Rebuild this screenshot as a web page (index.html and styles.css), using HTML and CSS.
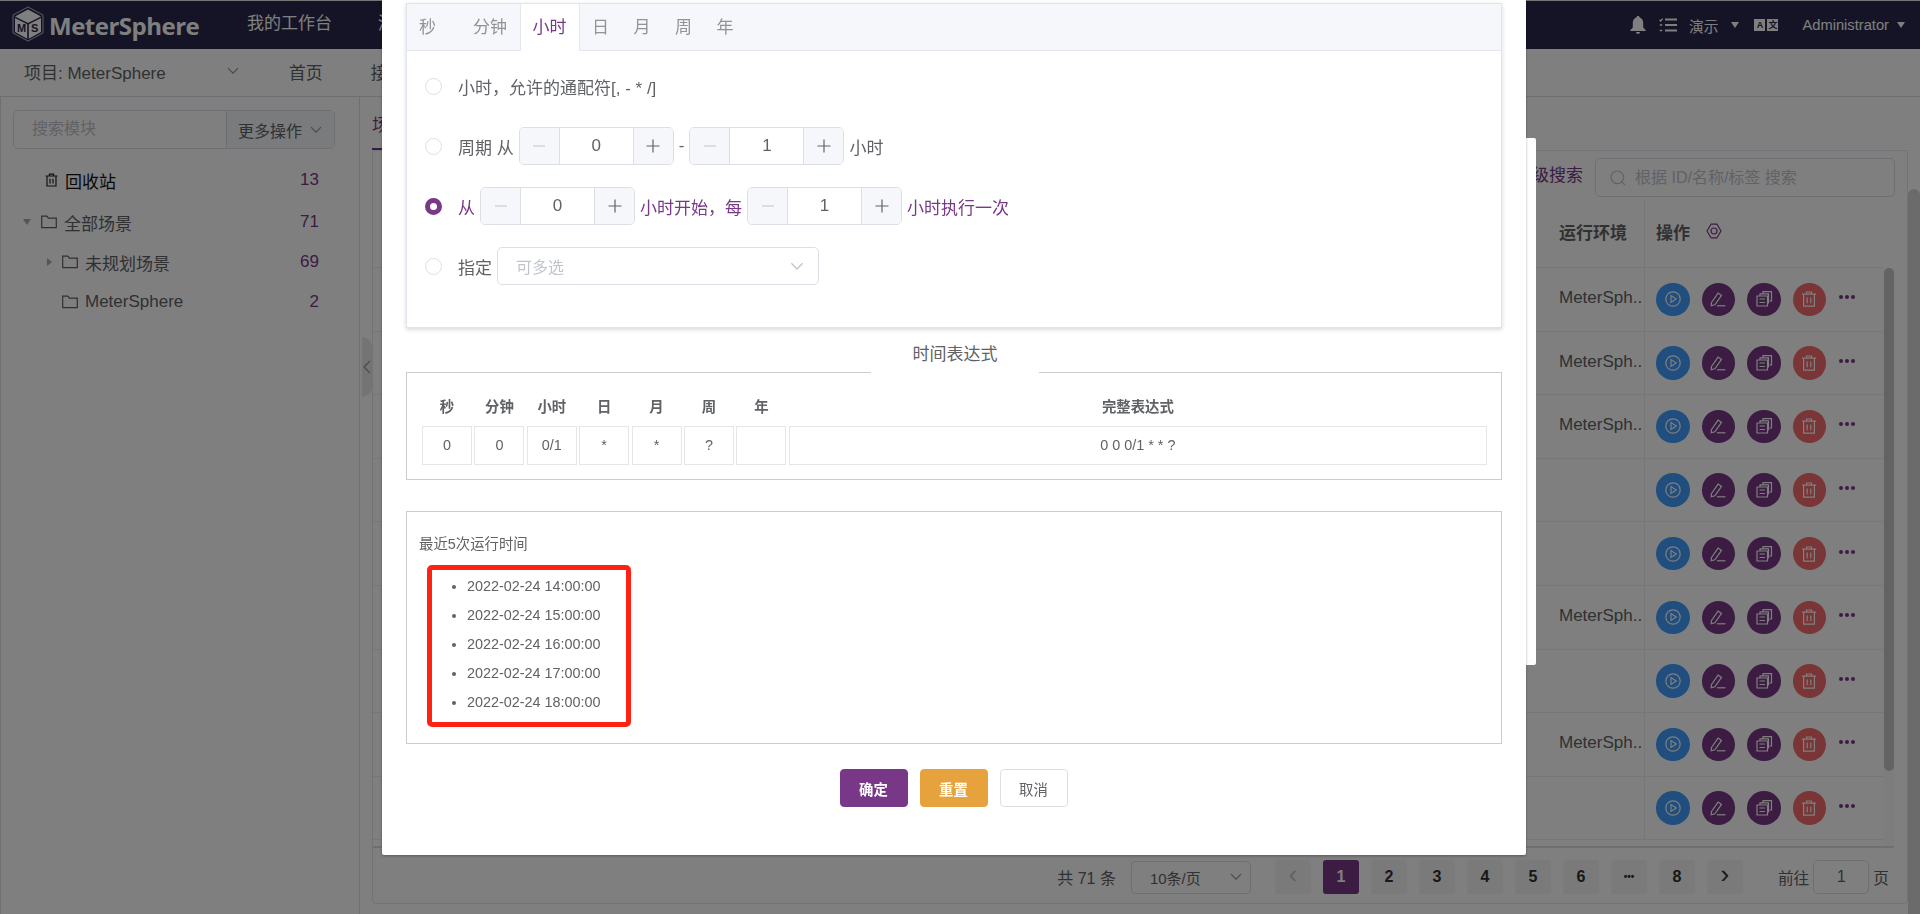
FILE: index.html
```html
<!DOCTYPE html>
<html lang="zh-CN">
<head>
    <meta charset="UTF-8">
    <title>MeterSphere</title>
    <link rel="stylesheet" href="styles.css">
</head>
<body>
    <svg class="defs" width="0" height="0">
        <symbol id="i-play" viewBox="0 0 18 18"><circle cx="9" cy="9" r="7.2"/><path d="M7 5.6v6.8l5.2-3.4z"/></symbol>
        <symbol id="i-edit" viewBox="0 0 18 18"><path d="M2.5 12.5l6.6-9.4 3.4 2.3-6.6 9.4-3.7 1z"/><path d="M8 15.8h8.5"/></symbol>
        <symbol id="i-copy" viewBox="0 0 18 18"><path d="M2 6h10.5v10H2zM4.500 9h5.500M4.500 12.500h5.500"/><path d="M5 6V3.800h8.500V13h-1M8 3.800V1.600h8.500V11h-2"/></symbol>
        <symbol id="i-del" viewBox="0 0 18 18"><path d="M2 4.200h14M6.500 4V2h5v2M3.600 4.400v11.800h10.800V4.400M7.200 7.400v5.800M10.800 7.400v5.800"/></symbol>
        <symbol id="i-folder" viewBox="0 0 16 14"><path d="M.7 12.600V1.200h5.200l1.400 2h8v9.400z"/></symbol>
        <symbol id="i-chevron" viewBox="0 0 12 8"><path d="M1 1.200l5 5 5-5"/></symbol>
        <symbol id="i-plus" viewBox="0 0 14 14"><path d="M7 .5v13M.5 7h13"/></symbol>
        <symbol id="i-minus" viewBox="0 0 14 14"><path d="M1 7h12"/></symbol>
    </svg>

    <!-- Top bar -->
    <header class="topbar">
        <div class="logo">
            <svg class="logo-cube" viewBox="0 0 32 36" width="32" height="36">
                <path d="M16 1L31 9v18l-15 8-15-8V9z" fill="none" stroke="#fff" stroke-width=".7"/>
                <path d="M16 3.500L29 10.500 16 17 3 10.500z" fill="#fff"/>
                <path d="M3 12l12.200 6.200v14.600L3 26z" fill="#fff"/>
                <path d="M29 12l-12.200 6.200v14.600L29 26z" fill="#fff"/>
                <text x="5" y="26" class="logo-m">M</text>
                <text x="19" y="26" class="logo-s">S</text>
            </svg>
            <span class="logo-text">MeterSphere</span>
        </div>
        <nav class="topnav">
            <a>我的工作台</a>
            <a>测试</a>
        </nav>
        <div class="topright">
            <svg class="bell" viewBox="0 0 16 18" width="16" height="18"><path d="M8 0c1 0 1.600.7 1.600 1.600C12 2.300 13.200 4.400 13.200 7v4.500L15.600 14v1H.4v-1l2.400-2.500V7c0-2.600 1.200-4.700 3.600-5.400C6.400.7 7 0 8 0zM6 16h4c0 1.100-.9 2-2 2s-2-.9-2-2z"/></svg>
            <svg class="tasks" viewBox="0 0 18 14" width="18" height="14"><path d="M6 1.500h12M6 7h12M6 12.500h12"/><path class="thin" d="M.5 1.800l1.200 1.200L3.600.6M.8 7h2.400M.8 12.500h2.400"/></svg>
            <span class="org">演示</span>
            <i class="caret-down"></i>
            <span class="lang"><b>A</b><b class="lang-zh">文</b></span>
            <span class="user">Administrator</span>
            <i class="caret-down"></i>
        </div>
    </header>

    <!-- Project bar -->
    <div class="subbar">
        <span class="project">项目: MeterSphere</span>
        <svg class="chev project-chev" width="12" height="8"><use href="#i-chevron"/></svg>
        <a class="sub-first">首页</a>
        <a>接口测试</a>
    </div>

    <div class="page">
        <aside class="side">
            <div class="side-search">
                <span class="side-input">搜索模块</span>
                <span class="side-more">更多操作<svg class="chev" width="12" height="8"><use href="#i-chevron"/></svg></span>
            </div>
            <div class="tree-row tree-trash">
                <svg class="trash" width="15" height="16" viewBox="0 0 18 18"><use href="#i-del"/></svg>
                <span class="tree-name">回收站</span><span class="tree-count">13</span>
            </div>
            <div class="tree-row">
                <i class="tree-caret open"></i>
                <svg class="folder" width="16" height="14"><use href="#i-folder"/></svg>
                <span>全部场景</span><span class="tree-count">71</span>
            </div>
            <div class="tree-row tree-child">
                <i class="tree-caret"></i>
                <svg class="folder" width="16" height="14"><use href="#i-folder"/></svg>
                <span>未规划场景</span><span class="tree-count">69</span>
            </div>
            <div class="tree-row tree-child">
                <i class="tree-caret none"></i>
                <svg class="folder" width="16" height="14"><use href="#i-folder"/></svg>
                <span>MeterSphere</span><span class="tree-count">2</span>
            </div>
        </aside>
        <div class="side-handle"><svg width="8" height="14" viewBox="0 0 8 14"><path d="M7 1L1 7l6 6"/></svg></div>

        <main class="content">
            <div class="content-tabs"><span class="content-tab">场景列表</span></div>
            <section class="list-card">
                <div class="toolbar">
                    <a class="adv">高级搜索</a>
                    <div class="list-search">
                        <svg width="16" height="16" viewBox="0 0 16 16"><circle cx="7.300" cy="7.300" r="6.300"/><path d="M12 12l3 3"/></svg>
                        <span>根据 ID/名称/标签 搜索</span>
                    </div>
                </div>
                <div class="table">
                    <div class="table-head">
                        <span></span>
                        <b>运行环境</b>
                        <div class="col-ops"><b>操作</b>
                            <svg class="gear" width="16" height="16" viewBox="0 0 16 16"><path d="M5 1.200h6L15 8l-4 6.800H5L1 8z" stroke-linejoin="round"/><circle cx="8" cy="8" r="3"/></svg>
                        </div>
                    </div>
                    <div class="table-main">
                        <div class="table-rows">
                            <div class="row"><span></span><span class="env">MeterSph..</span><div class="ops"><i class="op blue"><svg><use href="#i-play"/></svg></i><i class="op purple"><svg><use href="#i-edit"/></svg></i><i class="op purple"><svg><use href="#i-copy"/></svg></i><i class="op red"><svg><use href="#i-del"/></svg></i><i class="dots"></i></div></div>
                            <div class="row"><span></span><span class="env">MeterSph..</span><div class="ops"><i class="op blue"><svg><use href="#i-play"/></svg></i><i class="op purple"><svg><use href="#i-edit"/></svg></i><i class="op purple"><svg><use href="#i-copy"/></svg></i><i class="op red"><svg><use href="#i-del"/></svg></i><i class="dots"></i></div></div>
                            <div class="row"><span></span><span class="env">MeterSph..</span><div class="ops"><i class="op blue"><svg><use href="#i-play"/></svg></i><i class="op purple"><svg><use href="#i-edit"/></svg></i><i class="op purple"><svg><use href="#i-copy"/></svg></i><i class="op red"><svg><use href="#i-del"/></svg></i><i class="dots"></i></div></div>
                            <div class="row"><span></span><span class="env"></span><div class="ops"><i class="op blue"><svg><use href="#i-play"/></svg></i><i class="op purple"><svg><use href="#i-edit"/></svg></i><i class="op purple"><svg><use href="#i-copy"/></svg></i><i class="op red"><svg><use href="#i-del"/></svg></i><i class="dots"></i></div></div>
                            <div class="row"><span></span><span class="env"></span><div class="ops"><i class="op blue"><svg><use href="#i-play"/></svg></i><i class="op purple"><svg><use href="#i-edit"/></svg></i><i class="op purple"><svg><use href="#i-copy"/></svg></i><i class="op red"><svg><use href="#i-del"/></svg></i><i class="dots"></i></div></div>
                            <div class="row"><span></span><span class="env">MeterSph..</span><div class="ops"><i class="op blue"><svg><use href="#i-play"/></svg></i><i class="op purple"><svg><use href="#i-edit"/></svg></i><i class="op purple"><svg><use href="#i-copy"/></svg></i><i class="op red"><svg><use href="#i-del"/></svg></i><i class="dots"></i></div></div>
                            <div class="row"><span></span><span class="env"></span><div class="ops"><i class="op blue"><svg><use href="#i-play"/></svg></i><i class="op purple"><svg><use href="#i-edit"/></svg></i><i class="op purple"><svg><use href="#i-copy"/></svg></i><i class="op red"><svg><use href="#i-del"/></svg></i><i class="dots"></i></div></div>
                            <div class="row"><span></span><span class="env">MeterSph..</span><div class="ops"><i class="op blue"><svg><use href="#i-play"/></svg></i><i class="op purple"><svg><use href="#i-edit"/></svg></i><i class="op purple"><svg><use href="#i-copy"/></svg></i><i class="op red"><svg><use href="#i-del"/></svg></i><i class="dots"></i></div></div>
                            <div class="row"><span></span><span class="env"></span><div class="ops"><i class="op blue"><svg><use href="#i-play"/></svg></i><i class="op purple"><svg><use href="#i-edit"/></svg></i><i class="op purple"><svg><use href="#i-copy"/></svg></i><i class="op red"><svg><use href="#i-del"/></svg></i><i class="dots"></i></div></div>
                        </div>
                        <div class="table-track"><div class="table-scroll"></div></div>
                    </div>
                </div>
                <div class="pager">
                    <span class="pager-total">共 71 条</span>
                    <span class="pager-size">10条/页<svg class="chev" width="12" height="8"><use href="#i-chevron"/></svg></span>
                    <div class="pager-list">
                        <span class="pg arrow muted">&lsaquo;</span>
                        <span class="pg on">1</span>
                        <span class="pg">2</span>
                        <span class="pg">3</span>
                        <span class="pg">4</span>
                        <span class="pg">5</span>
                        <span class="pg">6</span>
                        <span class="pg more">•••</span>
                        <span class="pg">8</span>
                        <span class="pg arrow">&rsaquo;</span>
                    </div>
                    <span class="pager-jump">前往<span class="pager-input">1</span>页</span>
                </div>
            </section>
        </main>
        <div class="page-scroll"></div>
    </div>

    <!-- Mask and dialogs -->
    <div class="mask"></div>
    <div class="dialog-back"></div>
    <div class="dialog">
        <section class="cron-card">
            <div class="cron-tabs">
                <span class="cron-tab first">秒</span>
                <span class="cron-tab">分钟</span>
                <span class="cron-tab active">小时</span>
                <span class="cron-tab">日</span>
                <span class="cron-tab">月</span>
                <span class="cron-tab">周</span>
                <span class="cron-tab">年</span>
            </div>
            <div class="cron-body">
                <div class="cron-row">
                    <i class="radio"></i>
                    <span>小时，允许的通配符[, - * /]</span>
                </div>
                <div class="cron-row">
                    <i class="radio"></i>
                    <span>周期 从</span>
                    <div class="number"><span class="num-btn"><svg width="14" height="14"><use href="#i-minus"/></svg></span><span class="num-val">0</span><span class="num-btn dark"><svg width="14" height="14"><use href="#i-plus"/></svg></span></div>
                    <span>-</span>
                    <div class="number"><span class="num-btn"><svg width="14" height="14"><use href="#i-minus"/></svg></span><span class="num-val">1</span><span class="num-btn dark"><svg width="14" height="14"><use href="#i-plus"/></svg></span></div>
                    <span>小时</span>
                </div>
                <div class="cron-row checked">
                    <i class="radio"></i>
                    <span>从</span>
                    <div class="number"><span class="num-btn"><svg width="14" height="14"><use href="#i-minus"/></svg></span><span class="num-val">0</span><span class="num-btn dark"><svg width="14" height="14"><use href="#i-plus"/></svg></span></div>
                    <span>小时开始，每</span>
                    <div class="number"><span class="num-btn"><svg width="14" height="14"><use href="#i-minus"/></svg></span><span class="num-val">1</span><span class="num-btn dark"><svg width="14" height="14"><use href="#i-plus"/></svg></span></div>
                    <span>小时执行一次</span>
                </div>
                <div class="cron-row">
                    <i class="radio"></i>
                    <span>指定</span>
                    <div class="select"><span>可多选</span><svg class="chev" width="14" height="9"><use href="#i-chevron"/></svg></div>
                </div>
            </div>
        </section>

        <section class="box box-expr">
            <div class="box-title">时间表达式</div>
            <div class="expr-grid">
                <b>秒</b><b>分钟</b><b>小时</b><b>日</b><b>月</b><b>周</b><b>年</b><b>完整表达式</b>
                <span>0</span><span>0</span><span>0/1</span><span>*</span><span>*</span><span>?</span><span></span><span>0 0 0/1 * * ?</span>
            </div>
        </section>

        <section class="box box-runs">
            <p class="runs-title">最近5次运行时间</p>
            <div class="runs-mark">
                <ul class="runs">
                    <li>2022-02-24 14:00:00</li>
                    <li>2022-02-24 15:00:00</li>
                    <li>2022-02-24 16:00:00</li>
                    <li>2022-02-24 17:00:00</li>
                    <li>2022-02-24 18:00:00</li>
                </ul>
            </div>
        </section>

        <div class="dialog-btns">
            <button class="btn btn-ok">确定</button>
            <button class="btn btn-reset">重置</button>
            <button class="btn">取消</button>
        </div>
    </div>
</body>
</html>
```

FILE: styles.css
```css
* {
    box-sizing: border-box;
}
html, body {
    height: 100%;
}
body {
    margin: 0;
    overflow: hidden;
    font-family: "Liberation Sans", "Noto Sans CJK SC", sans-serif;
    font-size: 17px;
    color: #606266;
    background-color: #fff;
}
.defs {
    position: absolute;
}
.chev {
    fill: none;
    stroke: #909399;
    stroke-width: 1.2;
}

/* top bar */
.topbar {
    display: flex;
    align-items: center;
    height: 49px;
    border-top: 1px solid #e8e8e8;
    background-color: #28284c;
    color: #fff;
}
.logo {
    display: flex;
    align-items: center;
    width: 247px;
    padding-left: 12px;
}
.logo-cube {
    flex: none;
    margin-top: -2px;
}
.logo-m, .logo-s {
    font-size: 11px;
    font-weight: bold;
    fill: #28284c;
}
.logo-text {
    margin-left: 5px;
    font-size: 24px;
    font-weight: bold;
    font-family: "Open Sans", sans-serif;
    letter-spacing: -.5px;
}
.topnav {
    display: flex;
    gap: 46px;
    margin-top: -7px;
}
.topright {
    display: flex;
    align-items: center;
    margin-left: auto;
    padding-right: 15px;
    font-size: 14.700px;
}
.bell {
    fill: #fff;
}
.tasks {
    margin-left: 13px;
    stroke: #fff;
    stroke-width: 1.800;
    fill: none;
}
.tasks .thin {
    stroke-width: 1.300;
}
.org {
    margin-left: 12px;
}
.caret-down {
    width: 0;
    height: 0;
    margin-left: 13px;
    border-left: 4.500px solid transparent;
    border-right: 4.500px solid transparent;
    border-top: 6px solid #fff;
}
.lang {
    display: flex;
    margin-left: 15px;
}
.lang b {
    display: block;
    width: 11px;
    height: 12px;
    margin-right: 2px;
    background-color: #fff;
    color: #28284c;
    font-size: 9px;
    line-height: 12px;
    text-align: center;
}
.lang .lang-zh {
    margin-right: 0;
}
.user {
    margin-left: 24px;
}
.user + .caret-down {
    margin-left: 8px;
}

/* project bar */
.subbar {
    display: flex;
    align-items: center;
    height: 48px;
    padding: 0 0 3px 24px;
    border-bottom: 1px solid #dcdfe6;
}
.project-chev {
    margin-left: 61px;
}
.sub-first {
    margin-left: 50px;
    margin-right: 48px;
}

.page {
    display: flex;
    position: relative;
    height: 817px;
}

/* module tree */
.side {
    width: 360px;
    flex: none;
    padding: 13px 24px 0 12px;
    border-right: 1px solid #dcdfe6;
    border-left: 1px solid #dcdfe6;
}
.side-search {
    display: flex;
    height: 39px;
    border: 1px solid #dcdfe6;
    border-radius: 5px;
    font-size: 16px;
}
.side-input {
    flex: 1;
    padding-left: 18px;
    color: #c0c4cc;
    line-height: 35px;
}
.side-more {
    display: flex;
    align-items: center;
    gap: 8px;
    width: 108px;
    padding-left: 11px;
    border-left: 1px solid #dcdfe6;
    background-color: #f5f7fa;
    border-radius: 0 5px 5px 0;
}
.tree-row {
    display: flex;
    align-items: center;
    height: 40px;
    padding-right: 16px;
}
.tree-trash {
    margin-top: 11px;
    margin-bottom: 2px;
    padding-left: 31px;
    color: #111;
}
.trash {
    fill: none;
    stroke: #222;
    stroke-width: 1.400;
    margin-right: 6px;
}
.tree-caret {
    width: 0;
    height: 0;
    margin: 0 10px 0 11px;
    border-left: 5px solid #a8abb2;
    border-top: 4.500px solid transparent;
    border-bottom: 4.500px solid transparent;
}
.tree-caret.open {
    margin: 0 10px 0 10px;
    border-top: 6px solid #a8abb2;
    border-left: 4.500px solid transparent;
    border-right: 4.500px solid transparent;
    border-bottom: 0;
}
.tree-caret.none {
    border-left-color: transparent;
}
.tree-child {
    padding-left: 23px;
}
.folder {
    margin-right: 7px;
    fill: none;
    stroke: #606266;
    stroke-width: 1.200;
}
.tree-count {
    margin-left: auto;
    color: #783887;
}
.side-handle {
    display: flex;
    align-items: center;
    justify-content: center;
    position: absolute;
    left: 362px;
    top: 240px;
    width: 10px;
    height: 60px;
    border-radius: 0 10px 10px 0;
    background-color: #e8e8e8;
}
.side-handle svg {
    fill: none;
    stroke: #909399;
    stroke-width: 1.200;
}

/* scenario list */
.content {
    flex: 1;
    min-width: 0;
    padding-left: 12px;
}
.content-tabs {
    height: 53px;
    line-height: 58px;
    color: #783887;
    white-space: nowrap;
}
.content-tab {
    display: inline-block;
    height: 53px;
    border-bottom: 2px solid #783887;
}
.list-card {
    height: 754px;
    padding: 0 13px 0 0;
    border: 1px solid #e4e7ed;
    border-radius: 0 0 4px 4px;
}
.toolbar {
    display: flex;
    justify-content: flex-end;
    align-items: flex-start;
    gap: 12px;
    height: 49px;
    padding-top: 7px;
}
.adv {
    color: #783887;
    line-height: 35px;
}
.list-search {
    display: flex;
    align-items: center;
    gap: 9px;
    width: 300px;
    height: 39px;
    margin-right: -1px;
    padding-left: 14px;
    border: 1px solid #dcdfe6;
    border-radius: 5px;
    color: #c0c4cc;
    font-size: 16px;
}
.list-search span {
    margin-top: -3px;
}
.list-search svg {
    fill: none;
    stroke: #c0c4cc;
    stroke-width: 1.200;
}
.table-head, .row {
    display: grid;
    grid-template-columns: 1fr 85px 240px;
    align-items: center;
}
.table-head {
    height: 68px;
    margin-right: 10px;
    border-bottom: 1px solid #ebeef5;
}
.table-head > b {
    padding-bottom: 5px;
    color: #606266;
}
.col-ops {
    display: flex;
    align-items: center;
    align-self: stretch;
    gap: 16px;
    padding: 0 0 5px 11px;
    border-left: 1px solid #ebeef5;
}
.gear {
    fill: none;
    stroke: #783887;
    stroke-width: 1.200;
}
.table-main {
    display: flex;
    height: 580px;
    overflow: hidden;
    border-bottom: 2px solid #dcdfe6;
}
.table-rows {
    flex: 1;
}
.table-track {
    width: 10px;
    flex: none;
    background-color: #fafafa;
}
.table-scroll {
    height: 503px;
    border-radius: 5px;
    background-color: #c6c6c6;
}
.row {
    height: 63.600px;
    border-bottom: 1px solid #ebeef5;
}
.env {
    white-space: nowrap;
    margin-top: -2px;
}
.ops {
    display: flex;
    align-items: center;
    align-self: stretch;
    gap: 12px;
    padding-left: 11px;
    border-left: 1px solid #ebeef5;
}
.op {
    display: flex;
    align-items: center;
    justify-content: center;
    width: 33.500px;
    height: 33.500px;
    border-radius: 50%;
}
.op svg {
    width: 18px;
    height: 18px;
    fill: none;
    stroke: #fff;
    stroke-width: 1.200;
}
.blue {
    background-color: #409eff;
}
.purple {
    background-color: #783887;
}
.red {
    background-color: #f56c6c;
}
.dots {
    width: 4px;
    height: 4px;
    margin-left: 1px;
    border-radius: 50%;
    background-color: #783887;
    box-shadow: 6px 0 #783887, 12px 0 #783887;
    transform: translateY(-2px);
}
.pager {
    display: flex;
    align-items: center;
    height: 34px;
    margin-top: 12px;
    white-space: nowrap;
}
.pager-total {
    margin-left: auto;
    font-size: 16px;
}
.pager-size {
    display: flex;
    align-items: center;
    justify-content: space-between;
    width: 120px;
    height: 33px;
    margin-left: 15px;
    padding: 0 8px 0 18px;
    border: 1px solid #dcdfe6;
    border-radius: 4px;
    font-size: 15px;
}
.pager-list {
    display: flex;
    gap: 12px;
    margin-left: 24px;
}
.pg {
    width: 36px;
    height: 34px;
    border-radius: 3px;
    background-color: #f4f4f5;
    color: #303133;
    font-size: 16px;
    font-weight: bold;
    line-height: 34px;
    text-align: center;
}
.pg.on {
    background-color: #783887;
    color: #fff;
}
.pg.arrow {
    font-size: 26px;
    font-weight: normal;
    line-height: 29px;
}
.pg.more {
    font-size: 10px;
}
.pg.muted {
    color: #c0c4cc;
}
.pager-jump {
    display: flex;
    align-items: center;
    gap: 4px;
    margin-left: 35px;
    margin-right: 5px;
    font-size: 15.700px;
}
.pager-input {
    width: 56px;
    height: 34px;
    border: 1px solid #dcdfe6;
    border-radius: 5px;
    line-height: 32px;
    text-align: center;
}
.page-scroll {
    width: 12px;
    margin-top: 92px;
    flex: none;
    border-radius: 6px 6px 0 0;
    background-color: #d6d6d6;
}

/* dialogs */
.mask {
    position: fixed;
    top: 0;
    left: 0;
    right: 0;
    bottom: 0;
    background-color: rgba(0, 0, 0, .5);
}
.dialog-back {
    position: fixed;
    top: 138px;
    left: 382px;
    width: 1154px;
    height: 527px;
    border-radius: 2px;
    background-color: #fff;
}
.dialog {
    position: fixed;
    top: 0;
    left: 382px;
    width: 1144px;
    height: 855px;
    padding: 3px 24px 0;
    border-radius: 0 0 2px 2px;
    background-color: #fff;
    box-shadow: 0 1px 3px rgba(0, 0, 0, .3);
    color: #606266;
}
.cron-card {
    height: 325px;
    border: 1px solid #dfe4ed;
    box-shadow: 0 2px 4px rgba(0, 0, 0, .12), 0 0 6px rgba(0, 0, 0, .04);
}
.cron-tabs {
    display: flex;
    height: 47px;
    border-bottom: 1px solid #e4e7ed;
    background-color: #f5f7fa;
    color: #909399;
    line-height: 47px;
}
.cron-tab {
    padding: 0 12.500px 0 12px;
}
.cron-tab.first {
    padding-right: 25px;
}
.cron-tab.active {
    height: 47px;
    border-left: 1px solid #e4e7ed;
    border-right: 1px solid #e4e7ed;
    background-color: #fff;
    color: #783887;
}
.cron-body {
    padding: 5px 0 0 18px;
}
.cron-row {
    display: flex;
    align-items: center;
    gap: 5px;
    height: 60px;
}
.cron-row.checked {
    color: #783887;
}
.radio {
    flex: none;
    width: 17px;
    height: 17px;
    margin-right: 11px;
    border: 1px solid #dcdfe6;
    border-radius: 50%;
    background-color: #fff;
}
.checked .radio {
    border: 5.500px solid #783887;
}
.number {
    display: flex;
    width: 155px;
    height: 38px;
    border: 1px solid #dcdfe6;
    border-radius: 5px;
    overflow: hidden;
    color: #606266;
    line-height: 36px;
    text-align: center;
}
.num-btn {
    display: flex;
    align-items: center;
    justify-content: center;
    width: 40px;
    flex: none;
    background-color: #f5f7fa;
    fill: none;
    stroke: #c0c4cc;
    stroke-width: 1.200;
}
.num-btn:first-child {
    border-right: 1px solid #dcdfe6;
}
.num-btn.dark {
    border-left: 1px solid #dcdfe6;
    stroke: #606266;
}
.num-val {
    flex: 1;
}
.select {
    display: flex;
    align-items: center;
    justify-content: space-between;
    width: 322px;
    height: 38px;
    padding: 0 14px 0 18px;
    border: 1px solid #dcdfe6;
    border-radius: 5px;
    color: #c0c4cc;
    font-size: 16px;
}
.select .chev {
    stroke: #c0c4cc;
}
.box {
    position: relative;
    border: 1px solid #ccc;
}
.box-expr {
    height: 108px;
    margin-top: 44px;
    padding: 19px 14px 0 15px;
}
.box-title {
    position: absolute;
    top: -30px;
    left: 464px;
    width: 168px;
    height: 32px;
    background-color: #fff;
    font-size: 17px;
    line-height: 24px;
    text-align: center;
}
.expr-grid {
    display: grid;
    grid-template-columns: repeat(7, 50px) 1fr;
    grid-template-rows: 30px 39px;
    column-gap: 2.400px;
    row-gap: 4px;
    font-size: 14.400px;
    text-align: center;
}
.expr-grid b {
    line-height: 30px;
    font-size: 14.400px;
}
.expr-grid span {
    border: 1px solid #e6e6e6;
    line-height: 37px;
}
.box-runs {
    height: 233px;
    margin-top: 31px;
    padding: 22px 0 0 12px;
    font-size: 14.400px;
}
.runs-title {
    margin: 0 0 11px;
    line-height: 20px;
}
.runs-mark {
    width: 204px;
    height: 162px;
    margin-left: 8px;
    border: 5px solid #ff2214;
    border-radius: 5px;
}
.runs {
    margin: 0;
    padding: 2px 0 0 35px;
}
.runs li {
    height: 29px;
    line-height: 29px;
}
.dialog-btns {
    display: flex;
    justify-content: center;
    gap: 12px;
    margin-top: 25px;
    padding-right: 1px;
}
.btn {
    width: 68px;
    height: 38px;
    padding: 0;
    border: 1px solid #dcdfe6;
    border-radius: 4px;
    background-color: #fff;
    color: #606266;
    font-family: inherit;
    font-size: 14.400px;
}
.btn-ok {
    border-color: #783887;
    background-color: #783887;
    color: #fff;
    font-weight: bold;
}
.btn-reset {
    border-color: #e6a23c;
    background-color: #e6a23c;
    color: #fff;
    font-weight: bold;
}
```
